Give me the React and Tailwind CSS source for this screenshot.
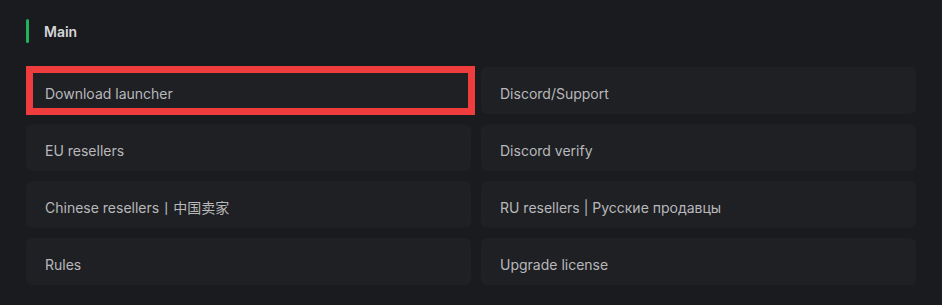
const links = [
  ['Download launcher', 'Discord/Support'],
  ['EU resellers', 'Discord verify'],
  ['Chinese resellers丨中国卖家', 'RU resellers | Русские продавцы'],
  ['Rules', 'Upgrade license'],
]

function LinkCard({ label, highlight }) {
  return (
    <div className="relative flex h-[47px] items-center rounded-md bg-[#1f2023] pl-[19px] pt-[6px] text-[14px] text-[#b8b8bc]">
      {label}
      {highlight && (
        <div className="pointer-events-none absolute -top-px left-0 h-[49px] w-[449px] border-[7px] border-[#ef3d3d]" />
      )}
    </div>
  )
}

export default function App() {
  return (
    <div
      className="h-[305px] w-full bg-[#1a1b1e] pl-[26px] pt-[19px]"
      style={{ fontFamily: 'Inter, "Noto Sans CJK SC", sans-serif' }}
    >
      {/* section header */}
      <div className="flex h-[24px] items-center gap-[15px]">
        <div className="h-[24px] w-[3px] rounded-full bg-[#21b35c]" />
        <span className="pt-[1px] text-[14px] font-semibold text-[#d6d6da]">Main</span>
      </div>

      <div className="mt-[24px] grid w-[890px] grid-cols-[445px_435px] gap-[10px]">
        {links.map(([left, right], i) => (
          <div key={i} className="contents">
            <LinkCard label={left} highlight={i === 0} />
            <LinkCard label={right} />
          </div>
        ))}
      </div>
    </div>
  )
}
